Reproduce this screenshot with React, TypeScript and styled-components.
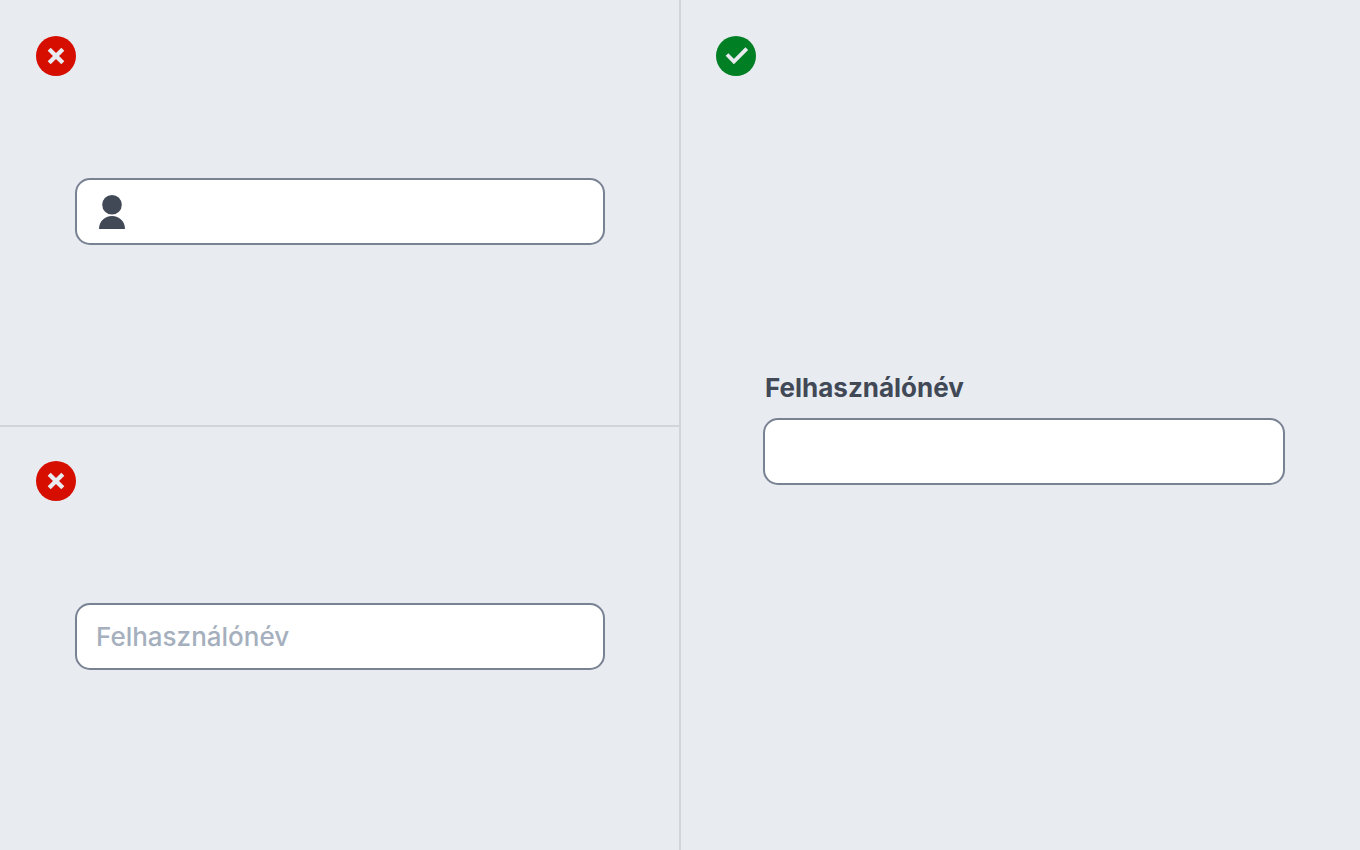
import React from "react";
import styled, { createGlobalStyle } from "styled-components";

const GlobalStyle = createGlobalStyle`
  *, *::before, *::after { box-sizing: border-box; }
  body {
    margin: 0;
    background: #e8ecf1;
    color: #414856;
    font-family: Inter, "Liberation Sans", sans-serif;
  }
`;

const Comparison = styled.main`
  display: grid;
  grid-template-columns: 1fr 1fr;
  min-height: 100vh;
`;

const Column = styled.div<{ $side: "left" | "right" }>`
  display: grid;
  grid-auto-rows: 1fr;
  ${({ $side }) => ($side === "left" ? "border-right" : "border-left")}: 1px solid #d0d5db;
`;

const Example = styled.section<{ $divided?: boolean }>`
  padding: 36px 0;
  box-shadow: ${({ $divided }) => ($divided ? "inset 0 2px #d0d5db" : "none")};
`;

const Badge = styled.svg<{ $indent: number }>`
  display: block;
  width: 40px;
  height: 40px;
  margin-left: ${({ $indent }) => $indent}px;
`;

const Field = styled.div<{ $side: "left" | "right"; $top: number }>`
  display: flex;
  flex-direction: column;
  margin: ${({ $top }) => $top}px ${({ $side }) => ($side === "left" ? 74 : 75)}px 0
    ${({ $side }) => ($side === "left" ? 75 : 82)}px;
`;

const Label = styled.label`
  padding-left: 2px;
  margin-bottom: 14px;
  font-size: 26px;
  line-height: 32px;
  font-weight: 700;
`;

const InputBox = styled.div`
  display: flex;
  align-items: center;
  height: 67px;
  padding: 0 19px;
  background: #fff;
  border: 2px solid #788292;
  border-radius: 15px;
`;

const TextInput = styled.input`
  flex: 1;
  min-width: 0;
  height: 100%;
  padding: 0;
  border: 0;
  outline: 0;
  background: transparent;
  color: #414856;
  font-family: inherit;
  font-size: 26px;
  &::placeholder {
    color: #a5afbd;
    font-weight: 500;
    opacity: 1;
  }
`;

const UserIcon = styled.svg`
  width: 26px;
  height: 34px;
  margin: 1px 12px 0 3px;
`;

const WrongBadge = () => (
  <Badge $indent={36} viewBox="0 0 40 40" aria-hidden="true">
    <circle cx="20" cy="20" r="20" fill="#d60e00" />
    <path d="M13.2 13.2 26.8 26.8M26.8 13.2 13.2 26.8" stroke="#e8ecf1" strokeWidth="4.3" />
  </Badge>
);

const RightBadge = () => (
  <Badge $indent={35} viewBox="0 0 40 40" aria-hidden="true">
    <circle cx="20" cy="20" r="20" fill="#007f24" />
    <path d="M11 18.5 17.9 25.5 30.8 12.6" fill="none" stroke="#e8ecf1" strokeWidth="3.8" />
  </Badge>
);

export default function App() {
  return (
    <>
      <GlobalStyle />
      <Comparison>
        <Column $side="left">
          <Example>
            <WrongBadge />
            <Field $side="left" $top={102}>
              <InputBox>
                <UserIcon viewBox="0 0 26 34" aria-hidden="true">
                  <circle cx="13" cy="9.8" r="9.8" fill="#414856" />
                  <path d="M0 34C0 26.5 5.6 21 13 21s13 5.5 13 13Z" fill="#414856" />
                </UserIcon>
                <TextInput type="text" aria-label="Felhasználónév" />
              </InputBox>
            </Field>
          </Example>
          <Example $divided>
            <WrongBadge />
            <Field $side="left" $top={102}>
              <InputBox>
                <TextInput type="text" placeholder="Felhasználónév" aria-label="Felhasználónév" />
              </InputBox>
            </Field>
          </Example>
        </Column>
        <Column $side="right">
          <Example>
            <RightBadge />
            <Field $side="right" $top={296}>
              <Label htmlFor="username">Felhasználónév</Label>
              <InputBox>
                <TextInput id="username" type="text" />
              </InputBox>
            </Field>
          </Example>
        </Column>
      </Comparison>
    </>
  );
}
